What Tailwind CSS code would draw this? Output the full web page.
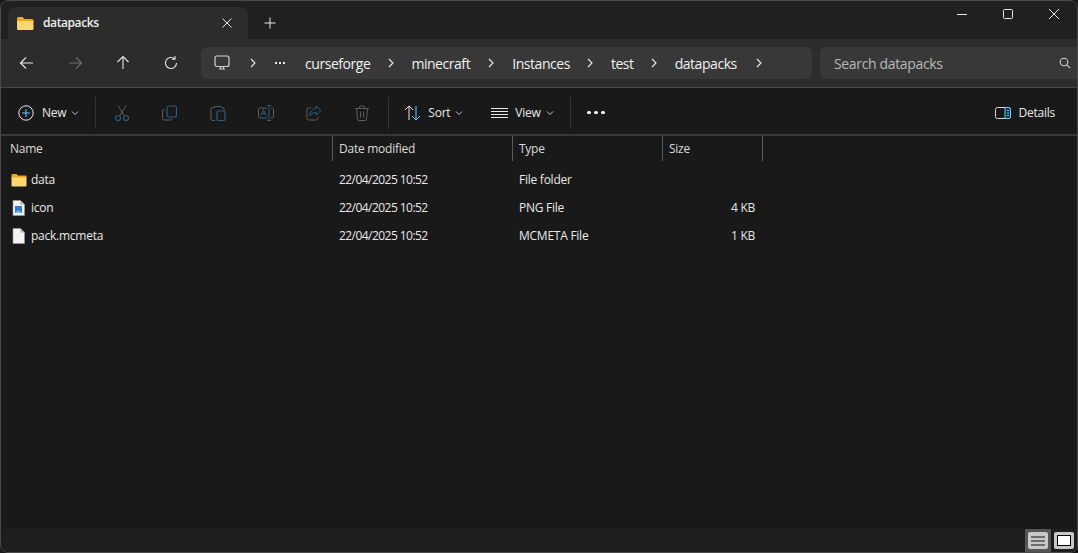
<!DOCTYPE html>
<html lang="en">
<head>
    <meta charset="UTF-8">
    <title>datapacks - File Explorer</title>
    <script src="https://cdn.jsdelivr.net/npm/@tailwindcss/browser@4"></script>
</head>
<body class="bg-[#191919] overflow-hidden">
<div class="w-[1078px] h-[553px] flex flex-col bg-[#191919] text-[12px] tracking-[-0.25px] text-[#e8e8e8] font-['Open_Sans','Noto_Sans',sans-serif] border border-[#4a4a4a] rounded-[8px] overflow-hidden box-border">

    <!-- Title bar with tab -->
    <div class="h-[38px] shrink-0 bg-[#202020] flex items-end pl-[7px]">
        <div class="w-[240px] h-[32px] bg-[#2c2c2c] rounded-t-[8px] flex items-center pl-[8px] pr-[14px]">
            <svg width="18" height="16" viewBox="0 0 18 16"><path d="M1 3.500a1.500 1.500 0 0 1 1.500-1.500h4l2 2h7.500a1.500 1.500 0 0 1 1.500 1.500v1H1z" fill="#e8a91c"/><path d="M1 6h16.500v7.500a1.500 1.500 0 0 1-1.500 1.500H2.500A1.500 1.500 0 0 1 1 13.500z" fill="#fcd770"/></svg>
            <span class="ml-[9px] text-[12px] font-semibold text-[#f0f0f0] tracking-[-0.4px]">datapacks</span>
            <svg class="ml-auto -translate-x-px" width="12" height="12" viewBox="0 0 12 12"><path d="M1.500 1.500l9 9m0-9l-9 9" stroke="#e8e8e8" stroke-width="1"/></svg>
        </div>
        <svg class="ml-[16px] mb-[10px]" width="12" height="12" viewBox="0 0 12 12"><path d="M6 .5v11M.5 6h11" stroke="#e8e8e8" stroke-width="1"/></svg>
        <div class="ml-auto flex items-center self-start pt-[7px] pr-[17px] gap-[34px]">
            <svg width="12" height="12" viewBox="0 0 12 12"><path d="M1 6.500h10" stroke="#e8e8e8" stroke-width="1"/></svg>
            <svg width="12" height="12" viewBox="0 0 12 12"><rect x="1.500" y="1.500" width="9" height="9" rx="1" fill="none" stroke="#e8e8e8"/></svg>
            <svg width="12" height="12" viewBox="0 0 12 12"><path d="M1 1l10 10m0-10L1 11" stroke="#e8e8e8" stroke-width="1"/></svg>
        </div>
    </div>

    <!-- Navigation bar -->
    <div class="h-[49px] shrink-0 bg-[#2c2c2c] border-b border-[#474747] flex items-center pl-[18px] pr-0">
        <div class="flex items-center gap-[32px] w-[182px]">
            <svg width="16" height="16" viewBox="0 0 16 16"><path d="M14 8H2m5-5.500L1.500 8 7 13.500" fill="none" stroke="#e8e8e8" stroke-width="1.100"/></svg>
            <svg width="16" height="16" viewBox="0 0 16 16"><path d="M2 8h12M9 2.500L14.500 8 9 13.500" fill="none" stroke="#6e6e6e" stroke-width="1.100"/></svg>
            <svg width="16" height="16" viewBox="0 0 16 16"><path d="M8 14V2M2.500 7L8 1.500 13.500 7" fill="none" stroke="#e8e8e8" stroke-width="1.100"/></svg>
            <svg width="16" height="16" viewBox="0 0 16 16"><path d="M13.500 8a5.500 5.500 0 1 1-1.800-4.100M12 1v3.200H8.800" fill="none" stroke="#e8e8e8" stroke-width="1.100"/></svg>
        </div>

        <div class="w-[611px] h-[32px] bg-[#383838] rounded-[6px] flex items-center text-[14px] text-[#f0f0f0] tracking-[-0.45px]">
            <svg class="ml-[13px]" width="16" height="16" viewBox="0 0 16 16"><rect x="1" y="1" width="14" height="10.500" rx="2" fill="none" stroke="#d4d4d4" stroke-width="1.200"/><path d="M5 14h6M6.500 12v2M9.500 12v2" stroke="#d4d4d4"/></svg>
            <svg class="ml-[19px]" width="8" height="10" viewBox="0 0 8 10"><path d="M2 1l4 4-4 4" fill="none" stroke="#e8e8e8" stroke-width="1.100"/></svg>
            <span class="ml-[18px] flex gap-[2px] w-[22px]"><i class="w-[2px] h-[2px] bg-[#f0f0f0]"></i><i class="w-[2px] h-[2px] bg-[#f0f0f0]"></i><i class="w-[2px] h-[2px] bg-[#f0f0f0]"></i></span>
            <span class="ml-[8px]">curseforge</span>
            <svg class="ml-[17px]" width="8" height="10" viewBox="0 0 8 10"><path d="M2 1l4 4-4 4" fill="none" stroke="#e8e8e8" stroke-width="1.100"/></svg>
            <span class="ml-[16px]">minecraft</span>
            <svg class="ml-[17px]" width="8" height="10" viewBox="0 0 8 10"><path d="M2 1l4 4-4 4" fill="none" stroke="#e8e8e8" stroke-width="1.100"/></svg>
            <span class="ml-[17px]">Instances</span>
            <svg class="ml-[16px]" width="8" height="10" viewBox="0 0 8 10"><path d="M2 1l4 4-4 4" fill="none" stroke="#e8e8e8" stroke-width="1.100"/></svg>
            <span class="ml-[17px]">test</span>
            <svg class="ml-[16px]" width="8" height="10" viewBox="0 0 8 10"><path d="M2 1l4 4-4 4" fill="none" stroke="#e8e8e8" stroke-width="1.100"/></svg>
            <span class="ml-[17px]">datapacks</span>
            <svg class="ml-[18px]" width="8" height="10" viewBox="0 0 8 10"><path d="M2 1l4 4-4 4" fill="none" stroke="#e8e8e8" stroke-width="1.100"/></svg>
        </div>

        <div class="ml-[8px] flex-1 h-[32px] bg-[#383838] rounded-l-[6px] flex items-center pl-[14px] pr-[6px] text-[14px] text-[#b8b8b8] tracking-[-0.35px]">
            <span>Search datapacks</span>
            <svg class="ml-auto" width="12" height="12" viewBox="0 0 12 12"><circle cx="5" cy="5" r="3.800" fill="none" stroke="#d0d0d0" stroke-width="1.100"/><path d="M7.800 7.800l3.400 3.400" stroke="#d0d0d0" stroke-width="1.100"/></svg>
        </div>
    </div>

    <!-- Command bar -->
    <div class="h-[46px] shrink-0 flex items-center pl-[17px] pt-[3px]">
        <svg width="16" height="16" viewBox="0 0 16 16"><circle cx="8" cy="8" r="7.200" fill="none" stroke="#e8e8e8" stroke-width="1"/><path d="M8 4v8M4 8h8" stroke="#60cdff" stroke-width="1"/></svg>
        <span class="ml-[8px]">New</span>
        <svg class="ml-[5px]" width="8" height="6" viewBox="0 0 8 6"><path d="M1 1.500l3 3 3-3" fill="none" stroke="#c8c8c8"/></svg>
        <div class="ml-[16px] w-px h-[32px] bg-[#333333]"></div>

        <svg class="ml-[18px]" width="16" height="16" viewBox="0 0 16 16"><path d="M4 .5l6 10M12 .5l-6 10" stroke="#5c5c5c"/><circle cx="4" cy="13" r="2.500" fill="none" stroke="#2b5b7e" stroke-width="1.200"/><circle cx="12" cy="13" r="2.500" fill="none" stroke="#2b5b7e" stroke-width="1.200"/></svg>
        <svg class="ml-[32px]" width="16" height="16" viewBox="0 0 16 16"><path d="M2.500 4.500h-.5A1.500 1.500 0 0 0 .5 6v7.500A1.500 1.500 0 0 0 2 15h6.500A1.500 1.500 0 0 0 10 13.500v-.5" fill="none" stroke="#5c5c5c"/><rect x="5" y="1" width="9.500" height="11" rx="2" fill="none" stroke="#2b5b7e" stroke-width="1.200"/></svg>
        <svg class="ml-[32px]" width="16" height="16" viewBox="0 0 16 16"><path d="M5 2.500H2.500A1.500 1.500 0 0 0 1 4v10a1.500 1.500 0 0 0 1.500 1.500H5M11 2.500h1.500A1.500 1.500 0 0 1 14 4v1.500M4.500 1.500h6.500" fill="none" stroke="#5c5c5c"/><rect x="7" y="6" width="8" height="9.500" rx="1.500" fill="none" stroke="#2b5b7e" stroke-width="1.200"/></svg>
        <svg class="ml-[32px]" width="16" height="16" viewBox="0 0 16 16"><path d="M9 3H2A1.500 1.500 0 0 0 .5 4.500v7A1.500 1.500 0 0 0 2 13h7M13 3h1A1.500 1.500 0 0 1 15.500 4.500v7a1.500 1.500 0 0 1-1.500 1.500h-1" fill="none" stroke="#5c5c5c"/><path d="M3 10.500l2.500-6 2.500 6M4 8.500h3" fill="none" stroke="#2b5b7e"/><path d="M9 .5h4M9 15.500h4M11 .5v15" stroke="#2b5b7e" fill="none"/></svg>
        <svg class="ml-[32px]" width="16" height="16" viewBox="0 0 16 16"><path d="M5 3H2.500A1.500 1.500 0 0 0 1 4.500v9A1.500 1.500 0 0 0 2.500 15h8a1.500 1.500 0 0 0 1.500-1.500V12" fill="none" stroke="#5c5c5c"/><path d="M10 1l5 4.500-5 4.500V7.500c-3 0-4.500 1-6 3.500 0-4 2-7 6-7.500z" fill="none" stroke="#2b5b7e"/></svg>
        <svg class="ml-[32px]" width="16" height="16" viewBox="0 0 16 16"><path d="M1 3.500h14M5.500 3.500V2a1 1 0 0 1 1-1h3a1 1 0 0 1 1 1v1.500M2.500 3.500l1 10.500a1.500 1.500 0 0 0 1.500 1.500h6a1.500 1.500 0 0 0 1.500-1.500l1-10.500M6.500 6.500v6M9.500 6.500v6" fill="none" stroke="#5c5c5c"/></svg>
        <div class="ml-[18px] w-px h-[32px] bg-[#333333]"></div>

        <svg class="ml-[15px]" width="18" height="16" viewBox="0 0 18 16"><path d="M5 15V1M1 5l4-4 4 4" fill="none" stroke="#e8e8e8"/><path d="M12 1v14M8 11l4 4 4-4" fill="none" stroke="#60cdff"/></svg>
        <span class="ml-[6px]">Sort</span>
        <svg class="ml-[5px]" width="8" height="6" viewBox="0 0 8 6"><path d="M1 1.500l3 3 3-3" fill="none" stroke="#c8c8c8"/></svg>
        <svg class="ml-[28px]" width="17" height="12" viewBox="0 0 17 12"><path d="M0 1.500h17M0 4.500h17M0 7.500h17M0 10.500h17" stroke="#e8e8e8"/></svg>
        <span class="ml-[7px]">View</span>
        <svg class="ml-[5px]" width="8" height="6" viewBox="0 0 8 6"><path d="M1 1.500l3 3 3-3" fill="none" stroke="#c8c8c8"/></svg>
        <div class="ml-[16px] w-px h-[32px] bg-[#333333]"></div>
        <span class="ml-[16px] flex gap-[3px]"><i class="w-[4px] h-[3px] rounded-full bg-[#f0f0f0]"></i><i class="w-[4px] h-[3px] rounded-full bg-[#f0f0f0]"></i><i class="w-[4px] h-[3px] rounded-full bg-[#f0f0f0]"></i></span>

        <svg class="ml-auto" width="16" height="14" viewBox="0 0 16 14"><rect x=".5" y="1.500" width="15" height="11" rx="2" fill="none" stroke="#d8d8d8"/><path d="M10 1.500h3.500a2 2 0 0 1 2 2v7a2 2 0 0 1-2 2H10z" fill="#12384f" stroke="#60cdff"/><path d="M12 4.500h2M12 7h2M12 9.500h2" stroke="#60cdff"/></svg>
        <span class="ml-[8px] mr-[22px]">Details</span>
    </div>

    <!-- File list -->
    <div class="flex-1 border-t-2 border-[#383838]">
        <div class="grid grid-cols-[332px_180px_150px_100px] h-[25px] text-[#dcdcdc] text-[12px]">
            <div class="border-r border-[#5a5a5a] pl-[9px] flex items-center">Name</div>
            <div class="border-r border-[#5a5a5a] pl-[6px] flex items-center">Date modified</div>
            <div class="border-r border-[#5a5a5a] pl-[6px] flex items-center">Type</div>
            <div class="border-r border-[#5a5a5a] pl-[6px] flex items-center">Size</div>
        </div>

        <div class="mt-[5px] grid grid-cols-[332px_180px_150px_100px] h-[28px] items-center">
            <div class="pl-[10px] flex items-center">
                <svg width="16" height="14" viewBox="0 0 16 14"><path d="M.500 2a1 1 0 0 1 1-1h4l1.500 1.500h7.500a1 1 0 0 1 1 1V5H.500z" fill="#e8a91c"/><path d="M.500 4.500h15v8a1 1 0 0 1-1 1h-13a1 1 0 0 1-1-1z" fill="#fcd770"/></svg>
                <span class="ml-[4px]">data</span>
            </div>
            <div class="pl-[6px] tracking-[-0.55px]">22/04/2025 10:52</div>
            <div class="pl-[6px]">File folder</div>
            <div></div>
        </div>
        <div class="grid grid-cols-[332px_180px_150px_100px] h-[28px] items-center">
            <div class="pl-[11px] flex items-center">
                <svg width="13" height="16" viewBox="0 0 13 16"><path d="M1 .5h7.500L12.500 4.500V15.500H1z" fill="#f4f4f4" stroke="#9a9a9a" stroke-width=".6"/><path d="M8.500 .5v4H12.500z" fill="#b0b0b0"/><rect x="3" y="6" width="7" height="7" fill="#2a7fd8"/><path d="M3 13l3-3 4 3z" fill="#76bdf5"/></svg>
                <span class="ml-[6px]">icon</span>
            </div>
            <div class="pl-[6px] tracking-[-0.55px]">22/04/2025 10:52</div>
            <div class="pl-[6px]">PNG File</div>
            <div class="text-right pr-[8px]">4 KB</div>
        </div>
        <div class="grid grid-cols-[332px_180px_150px_100px] h-[28px] items-center">
            <div class="pl-[11px] flex items-center">
                <svg width="13" height="16" viewBox="0 0 13 16"><path d="M1 .5h7.500L12.500 4.500V15.500H1z" fill="#f4f4f4" stroke="#9a9a9a" stroke-width=".6"/><path d="M8.500 .5v4H12.500z" fill="#b0b0b0"/></svg>
                <span class="ml-[6px]">pack.mcmeta</span>
            </div>
            <div class="pl-[6px] tracking-[-0.55px]">22/04/2025 10:52</div>
            <div class="pl-[6px]">MCMETA File</div>
            <div class="text-right pr-[8px]">1 KB</div>
        </div>
    </div>

    <!-- Status bar with view toggles -->
    <div class="h-[23px] shrink-0 bg-[#1e1e1e] flex items-center justify-end gap-[3px] pr-[3px]">
        <div class="w-[26px] h-[23px] bg-[#555555] flex items-center justify-center">
            <div class="w-[20px] h-[17px] bg-[#c8c8c8] rounded-[2px] flex items-center justify-center">
                <svg width="14" height="10" viewBox="0 0 14 10"><path d="M0 1h14M0 5h14M0 9h14" stroke="#111111" stroke-width="1.200"/></svg>
            </div>
        </div>
        <div class="w-[20px] h-[17px] bg-[#c8c8c8] rounded-[2px] flex items-center justify-center">
            <div class="w-[14px] h-[11px] bg-white border border-black"></div>
        </div>
    </div>
</div>
</body>
</html>
